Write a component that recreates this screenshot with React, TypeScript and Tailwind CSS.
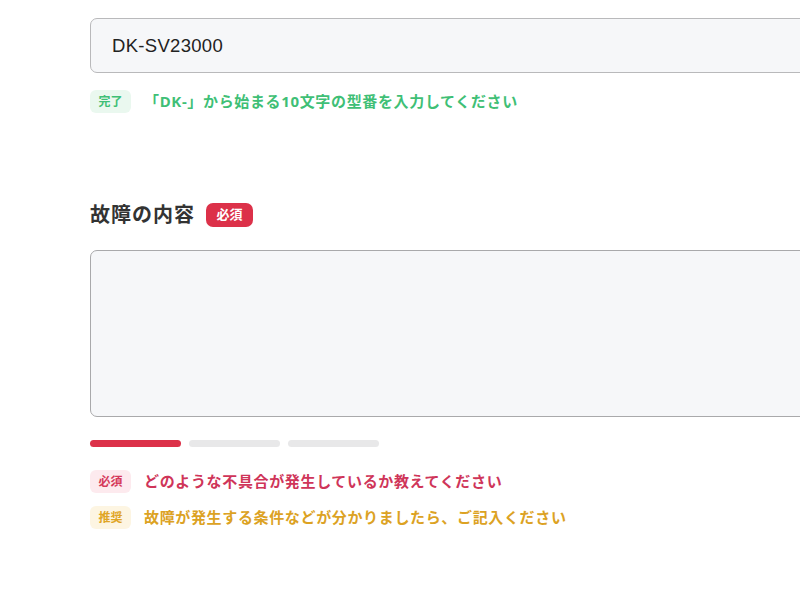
const jp = "font-['Noto_Sans','Noto_Sans_CJK_JP',sans-serif]"

type Tone = 'done' | 'required' | 'recommended'

const toneStyles: Record<Tone, { badge: string; text: string }> = {
  done: { badge: 'bg-[#eaf8ef] text-[#3fbf76]', text: 'text-[#3fbf76]' },
  required: { badge: 'bg-[#fdeaee] text-[#d5395a]', text: 'text-[#cf3559]' },
  recommended: { badge: 'bg-[#fdf5e2] text-[#e0a526]', text: 'text-[#dca223]' },
}

function Hint({ tone, label, children }: { tone: Tone; label: string; children: string }) {
  const s = toneStyles[tone]
  return (
    <div className="flex items-center h-[23px]">
      <span
        className={`inline-flex items-center justify-center w-[41px] h-[23px] rounded-[6px] text-[12px] font-bold ${s.badge}`}
      >
        {label}
      </span>
      <span className={`ml-[13px] text-[15px] font-bold tracking-[0.65px] ${s.text}`}>{children}</span>
    </div>
  )
}

export default function App() {
  return (
    <div className={`w-[800px] h-[600px] overflow-hidden bg-white ${jp}`}>
      <div className="pl-[90px] pt-[18px]">
        {/* Model number field */}
        <div className="w-[730px] h-[55px] rounded-[7px] border border-[#b9b9bb] bg-[#f6f7f9] flex items-center pl-[21px]">
          <span className="text-[18.5px] tracking-[0.3px] text-[#222] font-['Liberation_Sans','Noto_Sans_CJK_JP',sans-serif]">
            DK-SV23000
          </span>
        </div>
        <div className="mt-[17px]">
          <Hint tone="done" label="完了">
            「DK-」から始まる10文字の型番を入力してください
          </Hint>
        </div>

        {/* Fault description */}
        <div className="mt-[90px] flex items-center h-[24px]">
          <h2 className="text-[20px] font-bold tracking-[1px] text-[#333]">故障の内容</h2>
          <span className="ml-[11px] inline-flex items-center justify-center w-[47px] h-[24px] rounded-[7px] bg-[#dc3149] text-white text-[13px] font-bold">
            必須
          </span>
        </div>
        <div className="mt-[23px] w-[730px] h-[167px] rounded-[7px] border border-[#a9a9ab] bg-[#f6f7f9]" />

        {/* Progress */}
        <div className="mt-[23px] flex gap-[8px]">
          <div className="w-[91px] h-[7px] rounded-full bg-[#dc3149]" />
          <div className="w-[91px] h-[7px] rounded-full bg-[#e8e8e9]" />
          <div className="w-[91px] h-[7px] rounded-full bg-[#e8e8e9]" />
        </div>

        <div className="mt-[23px] flex flex-col gap-[13px]">
          <Hint tone="required" label="必須">
            どのような不具合が発生しているか教えてください
          </Hint>
          <Hint tone="recommended" label="推奨">
            故障が発生する条件などが分かりましたら、ご記入ください
          </Hint>
        </div>
      </div>
    </div>
  )
}
